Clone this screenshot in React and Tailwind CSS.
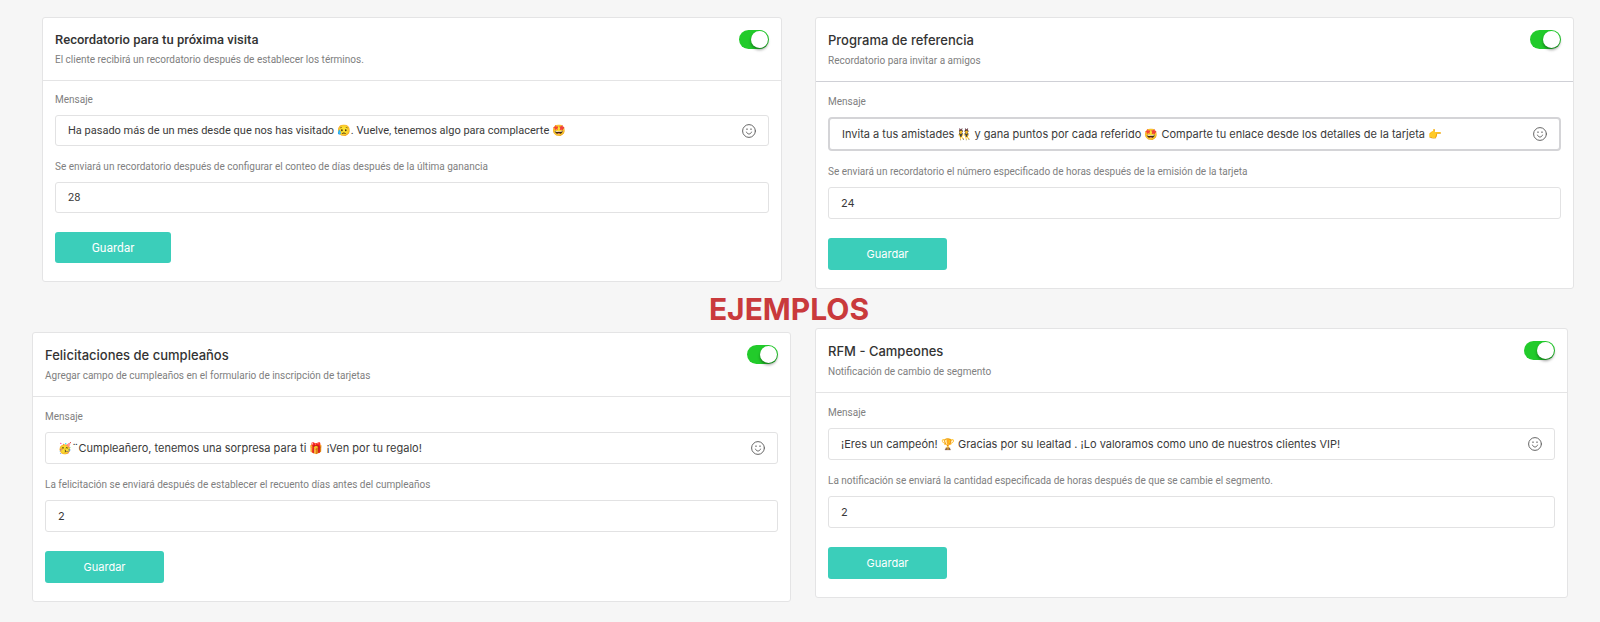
import { useId, useState } from 'react';
import clsx from 'clsx';

const CARDS = [
  {
    title: 'Recordatorio para tu próxima visita',
    subtitle: 'El cliente recibirá un recordatorio después de establecer los términos.',
    message: 'Ha pasado más de un mes desde que nos has visitado 😥. Vuelve, tenemos algo para complacerte 🤩',
    delayLabel: 'Se enviará un recordatorio después de configurar el conteo de días después de la última ganancia',
    delay: '28',
    compact: true,
    className: 'ml-[10px] mr-[9px]',
  },
  {
    title: 'Programa de referencia',
    subtitle: 'Recordatorio para invitar a amigos',
    message: 'Invita a tus amistades 👯 y gana puntos por cada referido 🤩 Comparte tu enlace desde los detalles de la tarjeta 👉',
    delayLabel: 'Se enviará un recordatorio el número especificado de horas después de la emisión de la tarjeta',
    delay: '24',
    active: true,
  },
  {
    title: 'Felicitaciones de cumpleaños',
    subtitle: 'Agregar campo de cumpleaños en el formulario de inscripción de tarjetas',
    message: '🥳¨Cumpleañero, tenemos una sorpresa para ti 🎁 ¡Ven por tu regalo!',
    delayLabel: 'La felicitación se enviará después de establecer el recuento días antes del cumpleaños',
    delay: '2',
    className: 'mt-1',
  },
  {
    title: 'RFM - Campeones',
    subtitle: 'Notificación de cambio de segmento',
    message: '¡Eres un campeón! 🏆 Gracias por su lealtad . ¡Lo valoramos como uno de nuestros clientes VIP!',
    delayLabel: 'La notificación se enviará la cantidad especificada de horas después de que se cambie el segmento.',
    delay: '2',
    className: 'mr-1.5',
  },
];

const labelClass = "block font-['Roboto',sans-serif] text-[10px] leading-4 text-[#808080]";

function SmileIcon() {
  return (
    <svg viewBox="0 0 14 14" className="size-3.5" fill="none" stroke="#666" strokeLinecap="round">
      <circle cx="7" cy="7" r="6.4" strokeWidth="1" />
      <path d="M4.5 8.1c.4 1.2 1.4 1.900 2.5 1.900s2.100-.7 2.500-1.900" />
      <path d="M5 4.900v.5M9 4.900v.5" strokeWidth="1.200" />
    </svg>
  );
}

function NotificationCard({ title, subtitle, message, delayLabel, delay, active, compact, className }) {
  const id = useId();
  const [enabled, setEnabled] = useState(true);
  const [text, setText] = useState(message);
  const [wait, setWait] = useState(delay);

  return (
    <section
      className={clsx(
        'rounded-[3px] border border-[#e4e4e5] bg-white',
        compact ? "font-['Roboto',sans-serif]" : "font-['Inter',sans-serif]",
        className
      )}
    >
      <header className={clsx('flex items-start justify-between border-b px-3 pt-3 pb-[11px]', active ? 'border-[#cfd0d6]' : 'border-[#e4e4e5]')}>
        <div>
          <h2 className="text-[13px] leading-5 font-medium text-[#333]">{title}</h2>
          <p className={clsx("font-['Roboto',sans-serif] text-[10px] leading-4 text-[#808080]", compact ? 'mt-0.5 mb-px' : 'mt-[3px] mb-px')}>{subtitle}</p>
        </div>
        <input
          type="checkbox"
          role="switch"
          aria-label={title}
          checked={enabled}
          onChange={(e) => setEnabled(e.target.checked)}
          className={clsx(
            'flex h-[19px] shrink-0 appearance-none items-center rounded-full bg-gray-300 px-px before:size-[17px] before:rounded-full before:bg-white before:shadow-[0_2px_3px_rgba(0,0,0,0.4)] checked:justify-end checked:bg-[#22cb2b]',
            compact ? 'w-[30px]' : 'w-[31px]'
          )}
        />
      </header>
      <form className={clsx('px-3 pb-[18px]', compact ? 'pt-[11px]' : 'pt-3')} onSubmit={(e) => e.preventDefault()}>
        <label htmlFor={`${id}-message`} className={labelClass}>Mensaje</label>
        <div
          className={clsx(
            'mt-[7px] flex items-center pr-3',
            active ? 'rounded-sm border-2 border-[#d4d4d7]' : 'rounded-[3px] border border-[#e2e2e3]'
          )}
        >
          <input
            id={`${id}-message`}
            type="text"
            value={text}
            onChange={(e) => setText(e.target.value)}
            className={clsx('min-w-0 flex-1 pl-3 text-[11px] text-[#3a3a3a] outline-none', compact ? 'h-[29px]' : 'h-[30px]')}
          />
          <button type="button" aria-label="Emoji"><SmileIcon /></button>
        </div>
        <label htmlFor={`${id}-delay`} className={clsx('mt-[13px]', labelClass)}>{delayLabel}</label>
        <input
          id={`${id}-delay`}
          type="text"
          value={wait}
          onChange={(e) => setWait(e.target.value)}
          className={clsx('mt-[7px] w-full rounded-[3px] border border-[#e2e2e3] pl-3 text-[11px] text-[#3a3a3a] outline-none', compact ? 'h-[31px]' : 'h-8')}
        />
        <button
          type="submit"
          className={clsx('mt-[19px] block rounded-[3px] bg-[#3bceba] text-white', compact ? 'h-[31px] w-[116px] text-[12px]' : 'h-8 w-[119px] text-[11px]')}
        >
          Guardar
        </button>
      </form>
    </section>
  );
}

export default function App() {
  const [first, second, third, fourth] = CARDS;
  return (
    <main className="min-h-screen bg-[#f6f6f6] pt-[17px] pr-[26px] pl-8">
      <div className="grid grid-cols-2 items-start gap-x-6">
        <NotificationCard {...first} />
        <NotificationCard {...second} />
      </div>
      <h1 className="pt-0.5 pr-7 text-center font-['Inter',sans-serif] text-[30px] leading-[37px] font-bold text-[#c93a3c]">EJEMPLOS</h1>
      <div className="grid grid-cols-2 items-start gap-x-6">
        <NotificationCard {...third} />
        <NotificationCard {...fourth} />
      </div>
    </main>
  );
}
